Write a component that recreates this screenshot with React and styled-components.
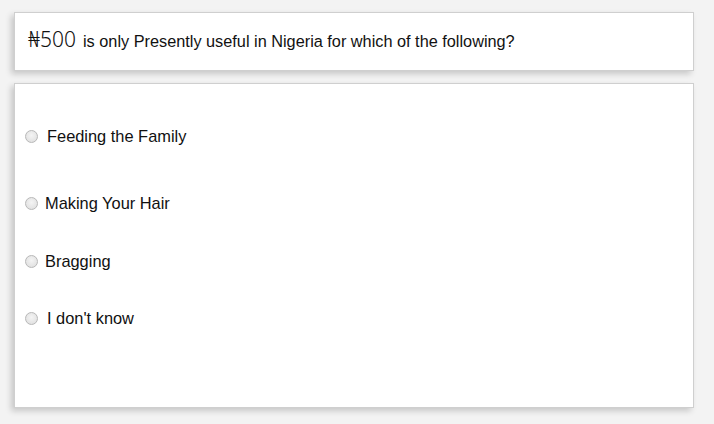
import styled, { createGlobalStyle } from 'styled-components';

const GlobalStyle = createGlobalStyle`
  html, body {
    margin: 0;
    padding: 0;
    background: #f3f3f3;
    font-family: "Liberation Sans", Arial, sans-serif;
    color: #111;
  }
`;

const Page = styled.div`
  padding: 12px 20px 16px 14px;
  display: flex;
  flex-direction: column;
  gap: 12px;
`;

const Card = styled.div`
  background: #fff;
  border: 1px solid #cfcfcf;
  box-shadow: -3px 3px 6px rgba(0, 0, 0, 0.18);
  box-sizing: border-box;
  width: 680px;
`;

const QuestionCard = styled(Card)`
  height: 59px;
  padding: 0 13px;
  display: flex;
  align-items: center;
`;

const Question = styled.p`
  margin: 0 0 5px;
  font-size: 16.3px;
  display: flex;
  align-items: baseline;
`;

const Price = styled.span`
  font-family: "Noto Sans", "DejaVu Sans", sans-serif;
  font-weight: 300;
  font-size: 21px;
  margin-right: 7px;
`;

const OptionsCard = styled(Card)`
  height: 325px;
  padding: 42px 10px 0;
`;

const Option = styled.label`
  display: flex;
  align-items: center;
  gap: ${p => (p.$wide ? '9px' : '7px')};
  margin-top: ${p => p.$top || 0}px;
  font-size: 16.4px;
  height: 20px;
  cursor: pointer;
`;

const Radio = styled.input.attrs({ type: 'radio' })`
  appearance: none;
  margin: 0;
  width: 13px;
  height: 13px;
  border-radius: 50%;
  border: 1px solid #b8b8b8;
  background: radial-gradient(circle at 50% 40%, #f4f4f4 0%, #dcdcdc 100%);
  box-sizing: border-box;
  flex-shrink: 0;
`;

const options = [
  { text: 'Feeding the Family', top: 0, wide: true },
  { text: 'Making Your Hair', top: 47, wide: false },
  { text: 'Bragging', top: 38, wide: false },
  { text: "I don't know", top: 37, wide: true },
];

const App = () => (
  <>
    <GlobalStyle />
    <Page>
      <QuestionCard>
        <Question>
          <Price>₦500</Price>
          is only Presently useful in Nigeria for which of the following?
        </Question>
      </QuestionCard>
      <OptionsCard>
        {options.map(o => (
          <Option key={o.text} $top={o.top} $wide={o.wide}>
            <Radio name="answer" />
            {o.text}
          </Option>
        ))}
      </OptionsCard>
    </Page>
  </>
);

export default App;
